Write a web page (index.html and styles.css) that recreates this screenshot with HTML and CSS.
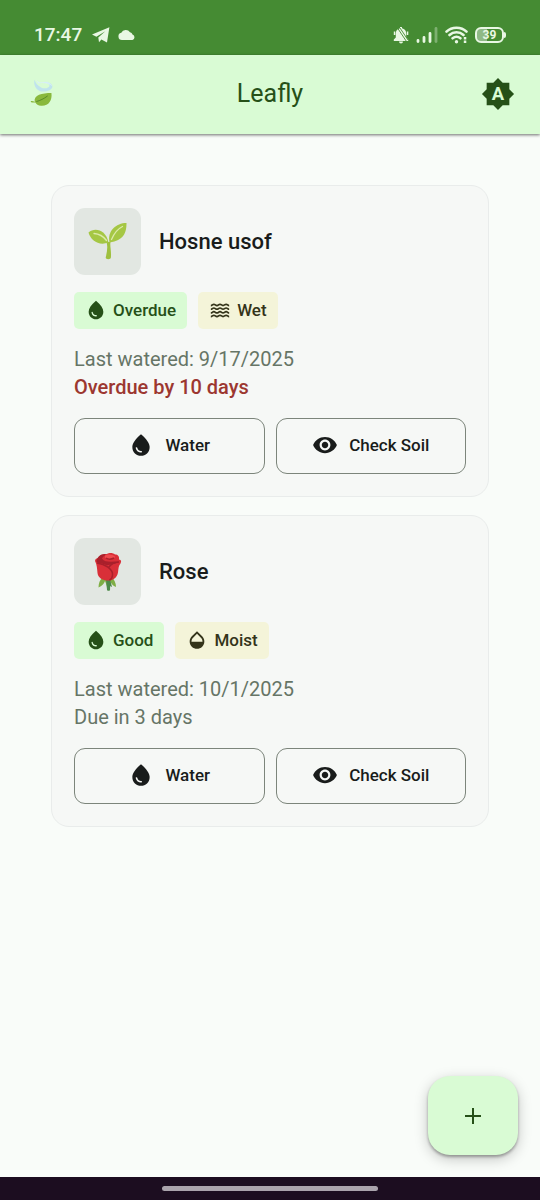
FILE: index.html
```html
<!DOCTYPE html>
<html lang="en">
<head>
<meta charset="utf-8">
<meta name="viewport" content="width=device-width, initial-scale=1">
<title>Leafly</title>
<link rel="stylesheet" href="styles.css">
</head>
<body>
<svg class="sprite" aria-hidden="true">
  <symbol id="drop" viewBox="0 0 24 24"><path fill-rule="evenodd" d="M12 2c-5.33 4.55-8 8.48-8 11.8 0 4.98 3.8 8.2 8 8.2s8-3.22 8-8.2c0-3.32-2.67-7.25-8-11.8zM7.83 14c.37 0 .67.26.74.62.41 2.22 2.28 2.98 3.64 2.87.43-.02.79.32.79.75 0 .4-.32.73-.72.75-2.13.13-4.62-1.09-5.19-4.12-.08-.45.28-.87.74-.87z"/></symbol>
  <symbol id="eye" viewBox="0 0 24 24"><path d="M12 4.5C7 4.5 2.73 7.61 1 12c1.73 4.39 6 7.5 11 7.5s9.27-3.11 11-7.5c-1.73-4.39-6-7.5-11-7.5zM12 17c-2.76 0-5-2.24-5-5s2.24-5 5-5 5 2.24 5 5-2.24 5-5 5zm0-8c-1.66 0-3 1.34-3 3s1.34 3 3 3 3-1.34 3-3-1.34-3-3-3z"/></symbol>
  <symbol id="half-drop" viewBox="0 0 24 24"><path d="M17.66 8L12 2.35 6.34 8C4.78 9.56 4 11.64 4 13.64s.78 4.11 2.34 5.67 3.61 2.35 5.66 2.35 4.1-.79 5.66-2.35S20 15.64 20 13.64 19.22 9.56 17.66 8zM6 14c.01-2 .62-3.27 1.76-4.4L12 5.27l4.24 4.38C17.38 10.77 17.99 12 18 14H6z"/></symbol>
  <symbol id="waves" viewBox="0 0 24 24"><path fill="none" stroke="currentColor" stroke-width="1.8" d="M2 7.200c1.700 0 1.700-1.400 3.300-1.400s1.700 1.400 3.400 1.400 1.600-1.400 3.300-1.400 1.700 1.400 3.300 1.400 1.700-1.400 3.400-1.400 1.600 1.400 3.300 1.400M2 11.200c1.700 0 1.700-1.400 3.300-1.400s1.700 1.400 3.400 1.400 1.600-1.400 3.300-1.400 1.700 1.400 3.300 1.400 1.700-1.400 3.400-1.400 1.600 1.400 3.300 1.400M2 15.200c1.700 0 1.700-1.400 3.300-1.400s1.700 1.400 3.400 1.400 1.600-1.400 3.300-1.400 1.700 1.400 3.300 1.400 1.700-1.400 3.400-1.400 1.600 1.400 3.300 1.400M2 19.200c1.700 0 1.700-1.400 3.300-1.400s1.700 1.400 3.400 1.400 1.600-1.400 3.300-1.400 1.700 1.400 3.300 1.400 1.700-1.400 3.400-1.400 1.600 1.400 3.300 1.400"/></symbol>
</svg>

<div class="status">
  <div class="status-group">
    <span class="clock">17:47</span>
    <svg width="18" height="16" viewBox="0 0 18 16"><path fill="currentColor" d="M0 7.6 17.4.3 15 15.6 9.4 12.4 7 15.2 6.3 10.6 13.3 4.2 4.4 9.7z"/></svg>
    <svg width="18" height="12" viewBox="0 0 18 12"><path fill="currentColor" d="M4 11a3.7 3.7 0 0 1-.7-7.3A5 5 0 0 1 12 3.2a3.2 3.2 0 0 1 2.5 2.3A2.9 2.9 0 0 1 14.500 11z"/></svg>
  </div>
  <div class="status-group status-right">
    <svg width="16" height="18" viewBox="0 0 16 18"><path fill="currentColor" d="M7 1h2v1.300c2.600.5 4.200 2.600 4.200 5.200v4l2 2V15H.8v-1.500l2-2v-4C2.800 4.900 4.400 2.800 7 2.300zM6 15.500h4a2 2 0 0 1-4 0zM.8 5.500h1.500V9H.8zM13.800 5.500h1.500V9h-1.500z"/><path stroke="#458b33" stroke-width=".9" d="M4.500 2 13.500 15.500M7 2 15 14"/></svg>
    <svg width="22" height="18" viewBox="0 0 22 18"><g stroke="currentColor" stroke-width="2.800" stroke-linecap="round"><path d="M2 14.500v1M8 11.500v4M14 7.500v8"/><path opacity=".35" d="M20 2.500v13"/></g></svg>
    <svg width="23" height="18" viewBox="0 0 23 18"><g fill="none" stroke="currentColor" stroke-width="2.600" stroke-linecap="round"><path d="M1.500 5.600c5.300-5.200 14.700-5.200 20 0M4.500 9c4-3.600 10-3.600 14 0M7.600 12.300c2.500-2 5.300-2 7.800 0"/></g><circle cx="11.500" cy="15.700" r="1.700" fill="currentColor"/><path fill="currentColor" d="M18.800 11h2.500v2.500h-2.500zM18.800 14.500h2.500V17h-2.500z"/></svg>
    <span class="battery">39</span>
  </div>
</div>

<header class="appbar">
  <svg class="leaf" width="34" height="34" viewBox="-3 0 36 36" role="img" aria-label="Leaf">
    <path fill="#b9ddf2" opacity=".8" d="M7 3c-1 5 1 10 6 12 6 1 13-1 13-5s-7-6-14-4c4-1 10 0 11 3 0 3-6 4-9 2C10 9 8 6 7 3z"/>
    <path fill="#d9f0fb" opacity=".8" d="M8 2c3 4 5 4 10 3 4 0 7 2 8 5-5-4-11-4-15-3z"/>
    <path fill="#89b83d" d="M3 25.500c2-.3 3 0 4.300 1C6 19 15 17 25 17c1 8-3 14-11 13.500-3 0-5-1.500-6-3.500-1.500 0-3 .2-4.500-.2z"/>
    <path fill="none" stroke="#568827" d="M9 26c4-1 8-3 12-6"/>
  </svg>
  <h1 class="title">Leafly</h1>
  <button class="theme" aria-label="Automatic brightness">
    <svg width="34" height="34" viewBox="0 0 24 24"><path fill="#265018" d="M20 8.690V4h-4.690L12 .690 8.690 4H4v4.690L.690 12 4 15.310V20h4.690L12 23.310 15.310 20H20v-4.690L23.310 12z"/><text class="theme-letter" x="12" y="16.300" text-anchor="middle">A</text></svg>
  </button>
</header>

<main class="plants">
  <article class="card">
    <div class="plant">
      <div class="tile">
        <svg width="40" height="40" viewBox="0 0 40 40" role="img" aria-label="Seedling">
          <path fill="#9fc03f" d="M18.500 20h4c-.8 4 1 9 .4 15.500-.1 2.200-5.200 2.200-5.200 0C19 30 20 25 18.500 20z"/>
          <path fill="#a5c744" d="M.5 10.500C7 5 18 8 20.500 20.500 11 24 3 19 .5 10.500z"/>
          <path fill="#a5c744" d="M38.500 1c0 10-3 17.500-17 19.500C19 9 28 1 38.500 1z"/>
          <path fill="none" stroke="#dcebab" stroke-width="1.300" stroke-linecap="round" d="M6 11.500c5 .3 9.500 3 12.500 7M23.500 17.500C26 11.500 29.500 7 34.500 4.500"/>
        </svg>
      </div>
      <h2 class="name">Hosne usof</h2>
    </div>
    <div class="chips">
      <span class="chip chip-green"><svg class="chip-icon"><use href="#drop"/></svg>Overdue</span>
      <span class="chip chip-yellow"><svg class="chip-icon"><use href="#waves"/></svg>Wet</span>
    </div>
    <div class="info">
      <p>Last watered: 9/17/2025</p>
      <p class="late">Overdue by 10 days</p>
    </div>
    <div class="actions">
      <button class="action"><svg class="action-icon"><use href="#drop"/></svg>Water</button>
      <button class="action"><svg class="action-icon"><use href="#eye"/></svg>Check Soil</button>
    </div>
  </article>

  <article class="card">
    <div class="plant">
      <div class="tile">
        <svg width="40" height="40" viewBox="0 0 40 40" role="img" aria-label="Rose">
          <path fill="#4d8a49" d="M18.500 25h4l-.5 13.500h-3z"/>
          <path fill="#7fae45" d="M14 26c-2 2-3.500 5-3.500 9.500C14 34 16 32 17 29l2.500 6.500L22 29c1.500 3 3 5 6 6 0-4-1.500-7-4-9.500z"/>
          <path fill="#4d8a49" d="m18 27 1 10 2 2 1-5 2 1-2-8z"/>
          <path fill="#d92f38" d="M7 9c0-2 1.500-3 4-3 1-3 5-4.500 8-4 2-1.500 6-1.500 8 .5 3 0 4.500 2 4 5 2.500.5 2.500 2 1.500 4-2 2-2 5-2.500 9C29 26 25 28.500 20 28.500S10 26 9.500 21C9 16 9 13 7 9z"/>
          <path fill="#a9202b" d="M8.500 10C8.500 5 13 1.500 17.500 2c1 1-2.500 2-3.500 4.500 3 4.500 10 3 17 3-4 3-9 2.500-12 4C15 11 11 12 8.500 10z"/>
          <path fill="#ee4b4e" d="M17 3.500c3-2 8-1 10 1-1 4-7 4-10 1z"/>
          <path fill="none" stroke="#a9202b" stroke-width="1.500" d="M9 11c8 1 16 6 15.500 12 0 2-1 4-3 5M31 10c-4 .5-8 2-10 5M18 6c3 2 6 1 8 0"/>
        </svg>
      </div>
      <h2 class="name">Rose</h2>
    </div>
    <div class="chips">
      <span class="chip chip-green"><svg class="chip-icon"><use href="#drop"/></svg>Good</span>
      <span class="chip chip-yellow"><svg class="chip-icon"><use href="#half-drop"/></svg>Moist</span>
    </div>
    <div class="info">
      <p>Last watered: 10/1/2025</p>
      <p>Due in 3 days</p>
    </div>
    <div class="actions">
      <button class="action"><svg class="action-icon"><use href="#drop"/></svg>Water</button>
      <button class="action"><svg class="action-icon"><use href="#eye"/></svg>Check Soil</button>
    </div>
  </article>
</main>

<button class="fab" aria-label="Add plant"><svg width="16" height="16" viewBox="0 0 16 16"><path stroke="#265018" stroke-width="2" d="M8 0v16M0 8h16"/></svg></button>
<div class="navbar"><span class="handle"></span></div>
</body>
</html>
```

FILE: styles.css
```css
* { box-sizing: border-box; }

body {
  margin: 0;
  min-height: 100vh;
  display: flex;
  flex-direction: column;
  background: #f9fcf9;
  color: #191c1b;
  font-family: Roboto, sans-serif;
}

h1, h2, p { margin: 0; }
button { font: inherit; color: inherit; cursor: pointer; }
svg { display: block; flex: none; fill: currentColor; }
.sprite { position: absolute; width: 0; height: 0; }

.status {
  height: 55px;
  padding: 14px 34px 0;
  display: flex;
  justify-content: space-between;
  align-items: center;
  background: #458b33;
  color: #e9f7e4;
}
.status-group { display: flex; align-items: center; gap: 8px; }
.status-right { gap: 7px; }
.clock { margin-right: 2px; font-size: 19px; font-weight: 500; line-height: 22px; }
.battery {
  position: relative;
  width: 29px;
  height: 16px;
  margin-right: 2px;
  border: 2px solid currentColor;
  border-radius: 6px;
  background: linear-gradient(90deg, #8fb986 39%, transparent 39%);
  font-size: 12px;
  font-weight: 700;
  line-height: 12px;
  text-align: center;
}
.battery::after {
  content: "";
  position: absolute;
  top: 3px;
  right: -4px;
  width: 2px;
  height: 6px;
  border-radius: 0 2px 2px 0;
  background: currentColor;
}

.appbar {
  z-index: 1;
  height: 79px;
  padding: 0 25px 2px;
  display: grid;
  grid-template-columns: 1fr auto 1fr;
  align-items: center;
  background: #d9fbd4;
  box-shadow: 0 1px 3px #00000090;
}
.title { color: #265018; font-size: 25px; font-weight: 400; line-height: 32px; }
.theme { justify-self: end; padding: 0; border: 0; background: none; }
.theme-letter { fill: #d9fbd4; font-size: 13px; font-weight: 700; }

.plants {
  flex: 1;
  padding: 51px 51px 120px;
  display: flex;
  flex-direction: column;
  gap: 18px;
}
.card {
  padding: 22px;
  display: flex;
  flex-direction: column;
  border: 1px solid #e9eceb;
  border-radius: 18px;
  background: #f6f8f6;
}
.plant { display: flex; align-items: center; gap: 18px; }
.tile {
  width: 67px;
  height: 67px;
  display: grid;
  place-items: center;
  border-radius: 11px;
  background: #e2e7e2;
}
.name { font-size: 22px; font-weight: 500; line-height: 32px; }

.chips { margin-top: 17px; display: flex; flex-wrap: wrap; gap: 11px; }
.chip {
  height: 37px;
  padding: 0 11px 2px;
  display: flex;
  align-items: center;
  gap: 6px;
  border-radius: 5px;
  font-size: 17px;
  font-weight: 500;
}
.chip-icon { width: 22px; height: 22px; }
.chip-green { background: #d9fbd4; color: #265018; }
.chip-yellow { background: #f4f4d9; color: #34341a; }

.info { margin-top: 16px; color: #667566; font-size: 20px; line-height: 28px; }
.late { color: #9c3730; font-weight: 500; }

.actions { margin-top: 17px; display: grid; grid-template-columns: 1fr 1fr; gap: 11px; }
.action {
  height: 56px;
  padding: 0 0 2px;
  display: flex;
  align-items: center;
  justify-content: center;
  gap: 11px;
  border: 1px solid #7c857b;
  border-radius: 11px;
  background: none;
  font-size: 17px;
  font-weight: 500;
}
.action-icon { width: 26px; height: 26px; }

.fab {
  position: fixed;
  right: 22px;
  bottom: 45px;
  width: 90px;
  height: 79px;
  display: grid;
  place-items: center;
  border: 0;
  border-radius: 22px;
  background: #d9fbd4;
  box-shadow: 0 2px 3px #00000050, 0 4px 14px #00000038;
}
.navbar {
  height: 23px;
  display: grid;
  place-items: center;
  background: #1c0d20;
}
.handle { width: 40%; height: 5px; border-radius: 3px; background: #aaa3ac; }
```
